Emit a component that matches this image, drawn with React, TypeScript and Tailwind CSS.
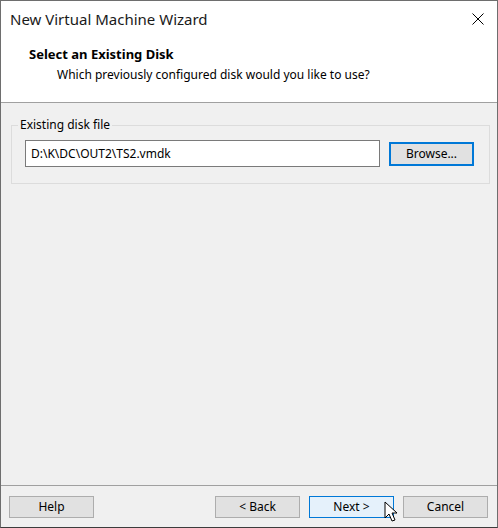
import React from 'react'

const font = { fontFamily: '"Segoe UI", "Noto Sans", sans-serif' }

function Cursor() {
  return (
    <svg width="14" height="22" viewBox="0 0 14 22" className="absolute left-[383px] top-[500px]">
      <path d="M1 1 L1 17 L5 13 L8 20 L11 19 L8 12 L13 12 Z" fill="#fff" stroke="#000" strokeWidth="1" strokeLinejoin="miter" />
    </svg>
  )
}

function WinButton({ label, primary, focus }: { label: string; primary?: boolean; focus?: boolean }) {
  return (
    <button
      className={
        'w-[85px] text-[12px] text-black flex items-center justify-center ' +
        (focus
          ? 'h-[24px] w-[84px] border-2 border-[#0078d7] bg-[#e1e1e1]'
          : primary
          ? 'h-[22px] border border-[#0078d7] bg-[#e5f1fb]'
          : 'h-[22px] border border-[#adadad] bg-[#e1e1e1]')
      }
    >
      {label}
    </button>
  )
}

export default function App() {
  return (
    <div className="relative w-[498px] h-[528px] bg-[#f0f0f0] flex flex-col border-l border-t border-r border-b border-[#6e6e6e] border-b-[#3c3c3c] overflow-hidden" style={font}>
      <div className="bg-white h-[102px] flex flex-col border-b border-[#a0a0a0]">
        <div className="h-[38px] flex items-center justify-between pl-[9px] pr-[13px]">
          <span className="text-[15px] text-[#1a1a1a] leading-none -mt-[2px]">New Virtual Machine Wizard</span>
          <svg width="12" height="12" viewBox="0 0 12 12" className="-mt-[2px]">
            <path d="M0.5 0.5 L11.5 11.5 M11.5 0.5 L0.5 11.5" stroke="#000" strokeWidth="1" />
          </svg>
        </div>
        <div className="pl-[28px] pt-[7px] text-[13px] font-bold text-black leading-[16px]">Select an Existing Disk</div>
        <div className="pl-[56px] pt-[5px] text-[12px] text-black leading-[16px]">Which previously configured disk would you like to use?</div>
      </div>

      <div className="flex-1 px-[10px] pt-[15px]">
        <fieldset className="border border-[#dcdcdc] h-[66px] pl-[13px] pr-[15px] w-[477px]">
          <legend className="px-[2px] ml-[-7px] text-[12px] text-black leading-[14px]">Existing disk file</legend>
          <div className="flex items-center gap-[9px] mt-[8px]">
            <div className="w-[355px] h-[27px] bg-white border border-[#7a7a7a] flex items-center pl-[5px] text-[12px] text-black">D:\K\DC\OUT2\TS2.vmdk</div>
            <WinButton label="Browse..." focus />
          </div>
        </fieldset>
      </div>

      <div className="h-[42px] border-t border-[#a0a0a0] flex items-start pt-[10px] pl-[8px]">
        <WinButton label="Help" />
        <div className="ml-[121px]"><WinButton label="< Back" /></div>
        <div className="ml-[9px]"><WinButton label="Next >" primary /></div>
        <div className="ml-[9px]"><WinButton label="Cancel" /></div>
      </div>
      <Cursor />
    </div>
  )
}
